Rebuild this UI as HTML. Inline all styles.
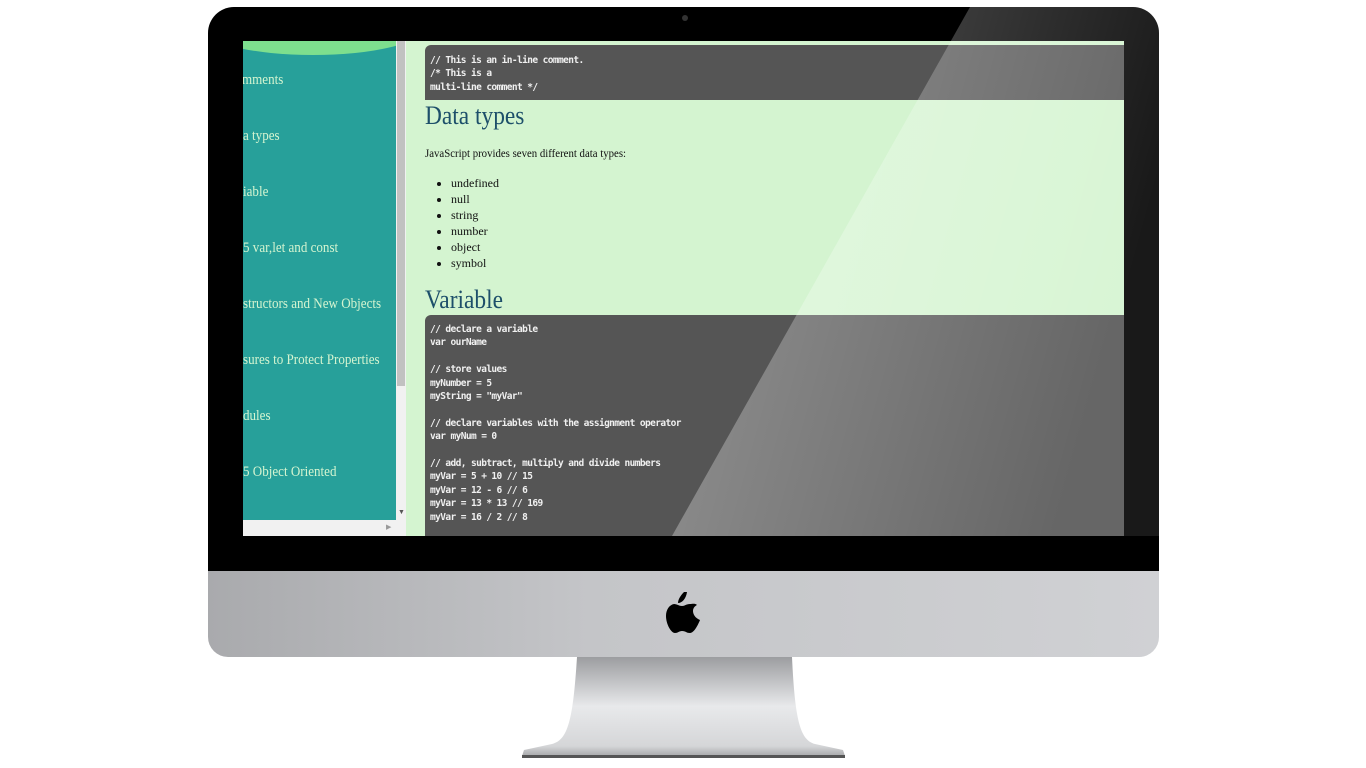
<!DOCTYPE html>
<html><head><meta charset="utf-8"><style>
*{margin:0;padding:0;box-sizing:border-box}
body{width:1366px;height:768px;background:#fff;position:relative;overflow:hidden;font-family:"Liberation Serif",serif}
.bezel{position:absolute;left:208px;top:7px;width:951px;height:564px;background:#000;border-radius:26px 26px 0 0}
.chin{position:absolute;left:208px;top:571px;width:951px;height:86px;background:linear-gradient(90deg,#a9aaad,#c4c5c8 40%,#d0d1d4);border-radius:0 0 20px 20px}
.cam{position:absolute;left:474px;top:8px;width:6px;height:6px;border-radius:50%;background:#333}
.screen{position:absolute;left:243px;top:41px;width:881px;height:495px;background:#d4f4d0;overflow:hidden}
.side{position:absolute;left:0;top:0;width:153px;height:479px;background:#27a09a;overflow:hidden}
.side .logo{position:absolute;left:-40px;top:-40px;width:220px;height:54px;border-radius:50%;background:#7ddf8e}
.side div.i{position:absolute;left:0;color:#d4f4d0;font-size:15px;white-space:nowrap;transform:scaleX(0.87);transform-origin:0 0}
.sb{position:absolute;left:153px;top:0;width:10px;height:479px;background:#f1f1f1}
.sb .th{position:absolute;left:1px;top:0;width:8px;height:345px;background:#c1c1c1}
.hb{position:absolute;left:0;top:479px;width:163px;height:16px;background:#f1f1f1}
.code{position:absolute;left:182px;background:#555;color:#f0f0f0;font-family:"DejaVu Sans Mono","Liberation Mono",monospace;font-size:9.5px;line-height:13.4px;padding:8px 5px;border-radius:6px 0 0 0;white-space:pre;width:699px;font-weight:bold;letter-spacing:-0.6px}
h2{position:absolute;left:182px;font-weight:normal;color:#1d4f6a;font-size:26px;transform:scaleX(0.9);transform-origin:0 0}
.p{position:absolute;left:182px;font-size:12px;color:#111;transform:scaleX(0.9);transform-origin:0 0;white-space:nowrap}
ul{position:absolute;left:208px;top:134px;font-size:12px;line-height:16px;color:#111}
.stand{position:absolute;left:0;top:0}
</style></head><body>
<div class="bezel"><div class="cam"></div></div>
<div class="screen">
 <div class="side">
  <div class="logo"></div>
  <div class="i" style="top:31px;left:-1px">mments</div>
  <div class="i" style="top:87px">a types</div>
  <div class="i" style="top:143px">iable</div>
  <div class="i" style="top:199px">5 var,let and const</div>
  <div class="i" style="top:255px">structors and New Objects</div>
  <div class="i" style="top:311px">sures to Protect Properties</div>
  <div class="i" style="top:367px">dules</div>
  <div class="i" style="top:423px">5 Object Oriented</div>
 </div>
 <div class="sb"><div class="th"></div><div style="position:absolute;left:2px;top:467px;font-size:7px;color:#555">▼</div></div>
 <div class="hb"><div style="position:absolute;left:143px;top:3px;font-size:7px;color:#999">▶</div></div>
 <div class="code" style="top:4px;height:55px;padding-top:9px">// This is an in-line comment.
/* This is a
multi-line comment */</div>
 <h2 style="top:60px">Data types</h2>
 <div class="p" style="top:105px">JavaScript provides seven different data types:</div>
 <ul><li>undefined</li><li>null</li><li>string</li><li>number</li><li>object</li><li>symbol</li></ul>
 <h2 style="top:244px">Variable</h2>
 <div class="code" style="top:274px;height:221px;padding-top:8px">// declare a variable
var ourName

// store values
myNumber = 5
myString = "myVar"

// declare variables with the assignment operator
var myNum = 0

// add, subtract, multiply and divide numbers
myVar = 5 + 10 // 15
myVar = 12 - 6 // 6
myVar = 13 * 13 // 169
myVar = 16 / 2 // 8</div>
</div>
<div class="chin"></div>
<svg class="stand" width="1366" height="768">
 <defs>
  <linearGradient id="sg" x1="0" y1="0" x2="0" y2="1">
   <stop offset="0" stop-color="#9c9da0"/><stop offset="0.5" stop-color="#e8e9eb"/><stop offset="0.9" stop-color="#d5d6d8"/><stop offset="1" stop-color="#a8a9ab"/>
  </linearGradient>
  <linearGradient id="gl" x1="0" y1="0" x2="1" y2="0.3">
   <stop offset="0" stop-color="#fff" stop-opacity="0.38"/><stop offset="1" stop-color="#fff" stop-opacity="0.1"/>
  </linearGradient>
 </defs>
 <path d="M577 657 L792 657 C795 720 800 740 815 744 L843 750 L845 756 L522 756 L524 750 L552 744 C568 740 573 720 577 657 Z" fill="url(#sg)"/>
 <rect x="522" y="755" width="323" height="3" fill="#555"/>
 <path d="M684 592 C680 596 678 600 678 603 C682 603 686 599 687 592 Z M690 604 C686 604 685 606 682 606 C679 606 677 604 674 604 C669 605 666 610 666 616 C666 624 671 633 675 633 C678 633 679 631 682 631 C686 631 686 633 690 633 C694 633 698 625 700 620 C695 618 693 614 693 611 C693 608 695 606 697 605 C695 603 692 604 690 604 Z" fill="#000"/>
 <path d="M970 7 L1133 7 Q1159 7 1159 33 L1159 536 L672 536 Z" fill="url(#gl)"/>
</svg>
</body></html>
